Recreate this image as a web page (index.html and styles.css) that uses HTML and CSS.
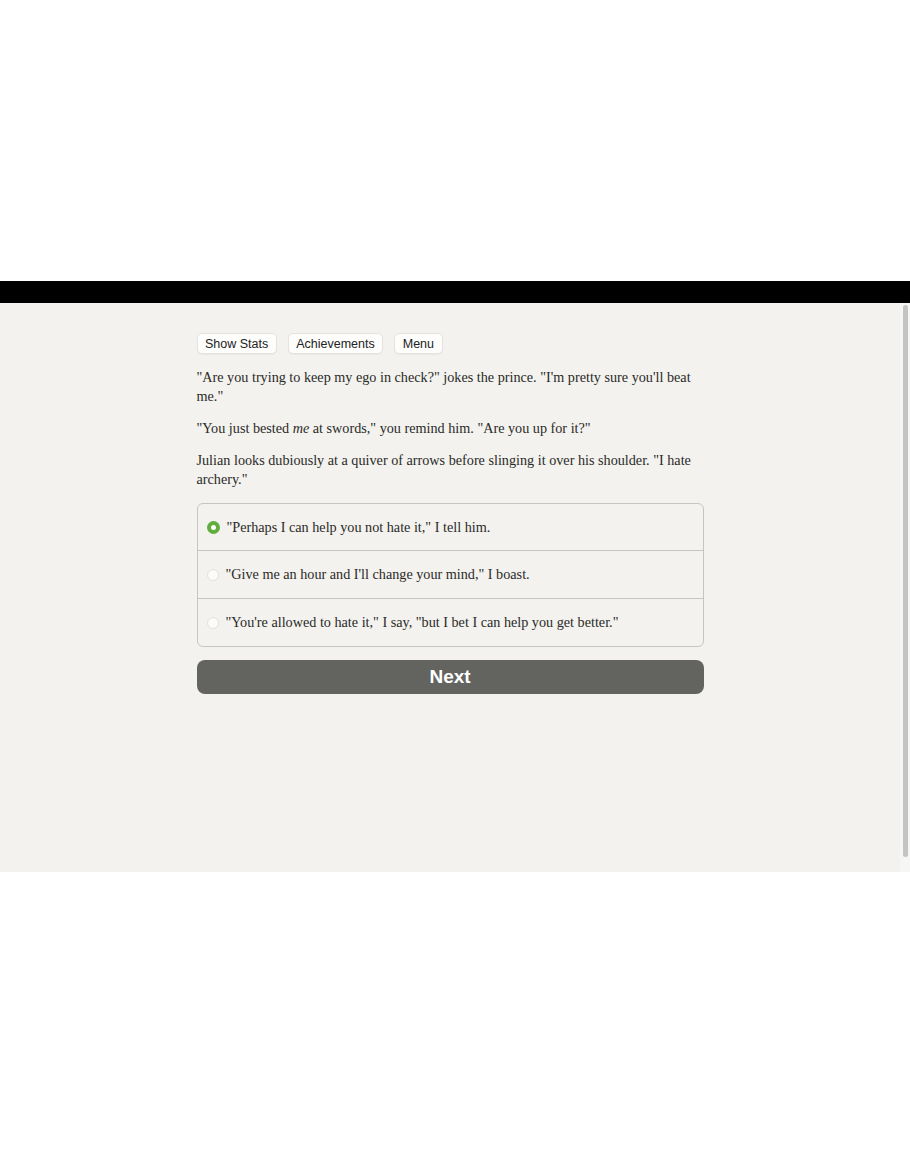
FILE: index.html
```html
<html>

<head>
	<meta charset="utf-8">
	<link rel="stylesheet" href="styles.css">
</head>

<body>
	<div class="top-space"></div>
	<div class="black-bar"></div>
	<div id="app">
		<div id="main">
			<div id="story">
				<div class="toolbar">
					<button class="tool-btn">Show Stats</button>
					<button class="tool-btn">Achievements</button>
					<button class="tool-btn">Menu</button>
				</div>
				<p>"Are you trying to keep my ego in check?" jokes the prince. "I'm pretty sure you'll beat me."</p>
				<p>"You just bested <i>me</i> at swords," you remind him. "Are you up for it?"</p>
				<p>Julian looks dubiously at a quiver of arrows before slinging it over his shoulder. "I hate archery."</p>
				<div class="choices">
					<label class="choice">
						<span class="radio checked"></span>
						<span>"Perhaps I can help you not hate it," I tell him.</span>
					</label>
					<label class="choice">
						<span class="radio"></span>
						<span>"Give me an hour and I'll change your mind," I boast.</span>
					</label>
					<label class="choice">
						<span class="radio"></span>
						<span>"You're allowed to hate it," I say, "but I bet I can help you get better."</span>
					</label>
				</div>
				<button class="next-btn">Next</button>
			</div>
		</div>
		<div class="scroll-track">
			<div class="scroll-thumb"></div>
		</div>
	</div>
</body>

</html>
```

FILE: styles.css
```css
body {
	margin: 0;
	background: #ffffff;
	color: #2a2a28;
	font-family: "Liberation Serif", serif;
}

.top-space {
	height: 281px;
}

.black-bar {
	height: 22px;
	background: #000000;
}

#app {
	display: flex;
	height: 569px;
	background: #f3f2ee;
}

#main {
	flex: 1;
}

#story {
	width: 507px;
	margin: 0 auto;
	padding-top: 30px;
	font-size: 14.2px;
	line-height: 19px;
}

.toolbar {
	display: flex;
	gap: 11px;
	margin-bottom: 14px;
}

.tool-btn {
	font-family: "Liberation Sans", sans-serif;
	font-size: 12.5px;
	color: #222222;
	background: #fdfdfc;
	border: 1px solid #e4e3df;
	border-radius: 5px;
	height: 21px;
	padding: 0 7.5px;
	box-shadow: 0 1px 1px rgba(0, 0, 0, 0.04);
}

#story p {
	margin: 0 0 13px 0;
}

.choices {
	border: 1px solid #c6c5c1;
	border-radius: 6px;
	margin-top: 14px;
}

.choice {
	display: flex;
	align-items: center;
	gap: 7px;
	height: 47px;
	padding-left: 9px;
	border-top: 1px solid #c6c5c1;
}

.choice:first-child {
	height: 46px;
	border-top: none;
}

.radio {
	width: 12px;
	height: 12px;
	border-radius: 50%;
	background: #fbfbfa;
	border: 1px solid #e2e1dd;
	box-sizing: border-box;
}

.radio.checked {
	width: 13px;
	height: 13px;
	background: #ffffff;
	border: 4px solid #5fae3e;
}

.next-btn {
	display: block;
	width: 100%;
	height: 34px;
	margin-top: 13px;
	background: #636360;
	color: #ffffff;
	border: none;
	border-radius: 8px;
	font-family: "Liberation Sans", sans-serif;
	font-weight: bold;
	font-size: 19px;
}

.scroll-track {
	width: 10px;
	background: #f6f6f4;
	padding: 2px 2px 15px 3px;
	box-sizing: border-box;
}

.scroll-thumb {
	height: 552px;
	background: #c4c4c2;
	border-radius: 3px;
}
```
